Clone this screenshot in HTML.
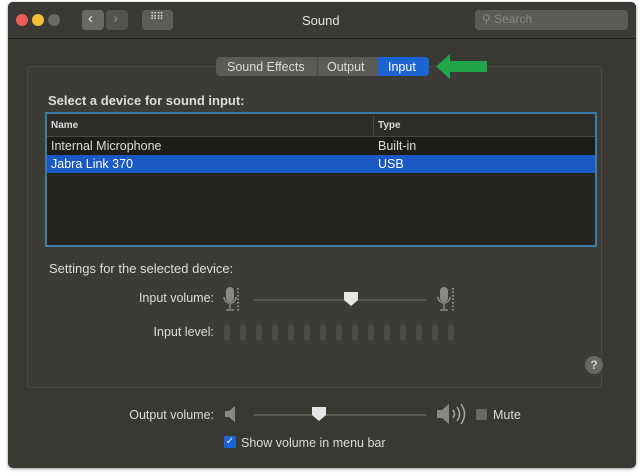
<!DOCTYPE html>
<html><head><style>
body{margin:0;width:642px;height:476px;background:#fff;font-family:"Liberation Sans",sans-serif;position:relative;overflow:hidden}
.a{position:absolute}
.win{left:8px;top:2px;width:628px;height:466px;background:#3a3833;border-radius:5px;box-shadow:0 1px 3px rgba(0,0,0,.4)}
.tb{left:8px;top:2px;width:628px;height:36px;background:#3b3935;border-radius:5px 5px 0 0;border-bottom:1px solid #1f1e1b}
.t{color:#dcdcdc;font-size:12.5px;white-space:nowrap}
.btn{background:#5f5d59;border-radius:4px}
</style></head><body>
<div class="a win"></div>
<div class="a tb"></div>
<div class="a" style="left:16px;top:14px;width:12px;height:12px;border-radius:50%;background:#ee5a55"></div>
<div class="a" style="left:32px;top:14px;width:12px;height:12px;border-radius:50%;background:#f2bd34"></div>
<div class="a" style="left:48px;top:14px;width:12px;height:12px;border-radius:50%;background:#6a6864"></div>
<div class="a btn" style="left:82px;top:10px;width:22px;height:20px;background:#6b6965"></div>
<div class="a btn" style="left:106px;top:10px;width:22px;height:20px;background:#55534f"></div>
<div class="a t" style="left:88px;top:10px;font-size:15px;color:#eee">&#8249;</div>
<div class="a t" style="left:113px;top:10px;font-size:15px;color:#888">&#8250;</div>
<div class="a btn" style="left:142px;top:10px;width:31px;height:20px"></div>
<div class="a t" style="left:150px;top:12px;font-size:10px;letter-spacing:-1px;color:#ddd">⠿⠿</div>
<div class="a t" style="left:302px;top:13px;font-size:13px;color:#e4e4e4">Sound</div>
<div class="a btn" style="left:475px;top:10px;width:153px;height:20px;background:#5c5a56"></div>
<div class="a t" style="left:482px;top:12px;font-size:12px;color:#8a8884">&#9906; Search</div>

<div class="a" style="left:27px;top:66px;width:573px;height:320px;border:1px solid #4c4a46;background:#3d3b36;border-radius:3px"></div>
<div class="a" style="left:216px;top:57px;width:213px;height:19px;background:#5d5b57;border-radius:4px"></div>
<div class="a" style="left:317px;top:57px;width:1px;height:19px;background:#4a4844"></div>
<div class="a" style="left:378px;top:57px;width:51px;height:19px;background:#1c64d4;border-radius:0 4px 4px 0"></div>
<div class="a t" style="left:227px;top:60px;font-size:12.5px">Sound Effects</div>
<div class="a t" style="left:327px;top:60px;font-size:12.5px">Output</div>
<div class="a t" style="left:388px;top:60px;font-size:12.5px;color:#fff">Input</div>
<svg class="a" style="left:436px;top:54px" width="52" height="25"><polygon points="0,12.5 14,0 14,7 51,7 51,18 14,18 14,25" fill="#1fa64a"/></svg>

<div class="a t" style="left:48px;top:93px;font-size:13px;font-weight:bold">Select a device for sound input:</div>
<div class="a" style="left:45px;top:112px;width:548px;height:131px;border:2px solid #3b7fa8;background:#272522"></div>
<div class="a" style="left:47px;top:114px;width:548px;height:22px;background:#2e2c29;border-bottom:1px solid #4a4844"></div>
<div class="a" style="left:373px;top:116px;width:1px;height:19px;background:#4a4844"></div>
<div class="a t" style="left:51px;top:120px;font-size:10px;font-weight:bold">Name</div>
<div class="a t" style="left:378px;top:120px;font-size:10px;font-weight:bold">Type</div>
<div class="a" style="left:47px;top:137px;width:548px;height:18px;background:#1e1d1a"></div>
<div class="a t" style="left:51px;top:139px">Internal Microphone</div>
<div class="a t" style="left:378px;top:139px">Built-in</div>
<div class="a" style="left:47px;top:155px;width:548px;height:18px;background:#1a58c4"></div>
<div class="a t" style="left:51px;top:157px;color:#fff">Jabra Link 370</div>
<div class="a t" style="left:378px;top:157px;color:#fff">USB</div>

<div class="a t" style="left:49px;top:261px;font-size:13px">Settings for the selected device:</div>
<div class="a t" style="left:100px;top:291px;width:114px;text-align:right">Input volume:</div>
<svg class="a" style="left:222px;top:286px" width="20" height="28"><rect x="4" y="1" width="8" height="15" rx="4" fill="#8a8884"/><path d="M2 11a6 6 0 0 0 12 0M8 17v6M4 24h8" stroke="#8a8884" stroke-width="1.5" fill="none"/><path d="M16 2v24" stroke="#aaa" stroke-width="1.5" stroke-dasharray="1.5 2"/></svg>
<div class="a" style="left:254px;top:299px;width:172px;height:2px;background:#5a5854"></div>
<svg class="a" style="left:343px;top:291px" width="16" height="16"><path d="M1 1h14v8l-7 6-7-6z" fill="#e6e6e6"/></svg>
<svg class="a" style="left:436px;top:286px" width="22" height="28"><rect x="4" y="1" width="8" height="15" rx="4" fill="#8a8884"/><path d="M2 11a6 6 0 0 0 12 0M8 17v6M4 24h8" stroke="#8a8884" stroke-width="1.5" fill="none"/><path d="M17 2v24" stroke="#aaa" stroke-width="1.5" stroke-dasharray="1.5 2"/></svg>
<div class="a t" style="left:100px;top:325px;width:114px;text-align:right">Input level:</div>
<svg class="a" style="left:224px;top:323px" width="240" height="20">
<g fill="#4d4b47">
<rect x="0" y="1" width="6" height="17" rx="3"/><rect x="16" y="1" width="6" height="17" rx="3"/><rect x="32" y="1" width="6" height="17" rx="3"/><rect x="48" y="1" width="6" height="17" rx="3"/><rect x="64" y="1" width="6" height="17" rx="3"/><rect x="80" y="1" width="6" height="17" rx="3"/><rect x="96" y="1" width="6" height="17" rx="3"/><rect x="112" y="1" width="6" height="17" rx="3"/><rect x="128" y="1" width="6" height="17" rx="3"/><rect x="144" y="1" width="6" height="17" rx="3"/><rect x="160" y="1" width="6" height="17" rx="3"/><rect x="176" y="1" width="6" height="17" rx="3"/><rect x="192" y="1" width="6" height="17" rx="3"/><rect x="208" y="1" width="6" height="17" rx="3"/><rect x="224" y="1" width="6" height="17" rx="3"/></g></svg>
<div class="a" style="left:585px;top:356px;width:18px;height:18px;border-radius:50%;background:#6a6864;color:#ccc;font-size:12px;font-weight:bold;text-align:center;line-height:18px">?</div>

<div class="a t" style="left:90px;top:408px;width:124px;text-align:right">Output volume:</div>
<svg class="a" style="left:224px;top:405px" width="14" height="18"><path d="M1 6h4l6-5v16l-6-5H1z" fill="#8a8884"/></svg>
<div class="a" style="left:254px;top:414px;width:172px;height:2px;background:#5a5854"></div>
<svg class="a" style="left:311px;top:406px" width="16" height="16"><path d="M1 1h14v8l-7 6-7-6z" fill="#e6e6e6"/></svg>
<svg class="a" style="left:436px;top:403px" width="32" height="22"><path d="M1 7h5l7-6v20l-7-6H1z" fill="#8a8884"/><path d="M17 7q3 4 0 8M21 4q5 7 0 14M25 1q7 10 0 20" stroke="#aaa" stroke-width="1.5" fill="none"/></svg>
<div class="a" style="left:476px;top:409px;width:11px;height:11px;background:#6a6864;border-radius:2px"></div>
<div class="a t" style="left:493px;top:408px">Mute</div>
<div class="a" style="left:224px;top:436px;width:12px;height:12px;background:#1c64d4;border-radius:2px;color:#fff;font-size:10px;text-align:center;line-height:12px">✓</div>
<div class="a t" style="left:241px;top:436px">Show volume in menu bar</div>
</body></html>
